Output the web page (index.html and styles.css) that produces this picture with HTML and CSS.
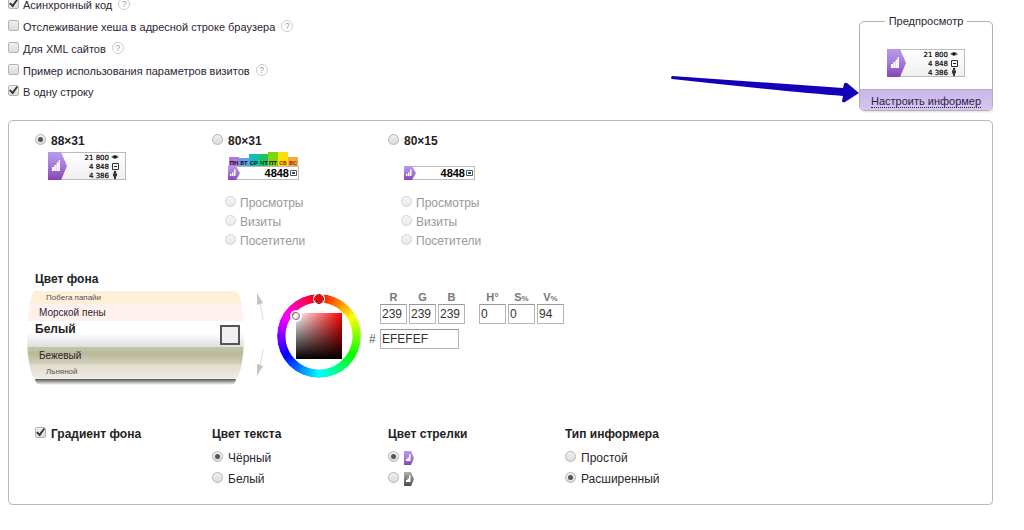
FILE: index.html
```html
<!DOCTYPE html>
<html lang="ru">
<head>
<meta charset="utf-8">
<title>Настройка информера</title>
<link rel="stylesheet" href="styles.css">
</head>
<body>
<svg class="defs" aria-hidden="true">
  <defs>
    <linearGradient id="violet" x1="0" y1="0" x2="0" y2="1"><stop offset="0" stop-color="#b99af0"/><stop offset=".5" stop-color="#a47ad8"/><stop offset="1" stop-color="#8744b4"/></linearGradient>
    <linearGradient id="gray" x1="0" y1="0" x2="0" y2="1"><stop offset="0" stop-color="#b4b4b4"/><stop offset="1" stop-color="#4a4a4a"/></linearGradient>
    <linearGradient id="paper" x1="0" y1="0" x2="0" y2="1"><stop offset="0" stop-color="#fff"/><stop offset="1" stop-color="#efefef"/></linearGradient>
    <symbol id="informer-large" viewBox="0 0 78 28">
      <rect x=".5" y=".5" width="77" height="27" fill="url(#paper)" stroke="#bbb"/>
      <path d="M0 0h13l6 14-6 14H0z" fill="url(#violet)"/>
      <path d="M4 15h2v4H4zM6.300 13h2v6h-2zM8.600 10.500h1.800V19H8.600zM10.600 8H12v11h-1.400z" fill="#fff"/>
      <g class="digits"><text x="61" y="8">21 800</text><text x="61" y="17">4 848</text><text x="61" y="26">4 386</text></g>
      <path d="M63 5q4-4 8 0q-4 3-8 0z" fill="#666"/><circle cx="67" cy="5" r="1.500" fill="#111"/>
      <path d="M64.500 11.500h6v6h-6z" fill="none" stroke="#333"/><path d="M66 14h3v1h-3z" fill="#222"/>
      <circle cx="67" cy="20" r="1.200" fill="#222"/><path d="M65 21.300h4v3h-1V27h-2v-2.500h-1z" fill="#333"/>
    </symbol>
    <symbol id="informer-line" viewBox="0 0 71 14">
      <rect x=".5" y=".5" width="70" height="13" fill="#fff" stroke="#bbb"/>
      <path d="M0 0h8l4 7-4 7H0z" fill="url(#violet)"/>
      <path d="M2 8h1.500v2H2zM4 6.500h1.500V10H4zM6 3.500h1.500V10H6z" fill="#fff"/>
      <text class="total" x="61" y="11">4848</text>
      <path d="M62.500 4.500h6v5h-6z" fill="none" stroke="#555"/><path d="M64 6h3v2h-3z" fill="#444"/>
    </symbol>
    <symbol id="tag" viewBox="0 0 10 14">
      <path d="M0 0h7l3 7-3 7H0z"/><path d="M2 8h1.500v2H2zM3.500 6.500H5V10H3.500zM5 3.500h1.500V10H5z" fill="#fff"/>
    </symbol>
  </defs>
</svg>

<header class="top">
  <ul class="options">
    <li><label><input type="checkbox" checked>Асинхронный код</label><button type="button" class="help" aria-label="Справка">?</button></li>
    <li><label><input type="checkbox">Отслеживание хеша в адресной строке браузера</label><button type="button" class="help" aria-label="Справка">?</button></li>
    <li><label><input type="checkbox">Для XML сайтов</label><button type="button" class="help" aria-label="Справка">?</button></li>
    <li><label><input type="checkbox">Пример использования параметров визитов</label><button type="button" class="help" aria-label="Справка">?</button></li>
    <li><label><input type="checkbox" checked>В одну строку</label></li>
  </ul>
  <div class="preview-wrap">
    <svg class="pointer" viewBox="0 0 188 28" aria-hidden="true"><path d="M1 0L172 12L173 8Q174 6 176 7L188 17L174 26Q171 27 171 25L172 20Q120 16 1 3Q-1 2 1 0z" fill="#1400b8"/></svg>
    <fieldset class="preview">
      <legend>Предпросмотр</legend>
      <svg class="large"><use href="#informer-large"/></svg>
      <div class="preview-foot"><a href="#settings">Настроить информер</a></div>
    </fieldset>
  </div>
</header>

<main class="panel" id="settings">
  <section class="columns">
    <div>
      <label class="size"><input type="radio" name="size" checked>88×31</label>
      <div class="sample"><svg class="large"><use href="#informer-large"/></svg></div>
    </div>
    <div>
      <label class="size"><input type="radio" name="size">80×31</label>
      <div class="sample indent">
        <svg class="week" viewBox="0 0 71 28">
          <path d="M1 5h10v9H1z" fill="#b279dd"/><path d="M11 6h10v8H11z" fill="#6c9fe8"/><path d="M21 2h10v12H21z" fill="#16bdb8"/><path d="M31 2h9v12h-9z" fill="#1bc45c"/><path d="M40 0h10v14H40z" fill="#83d30c"/><path d="M50 0h10v14H50z" fill="#f9df0c"/><path d="M60 5h10v9H60z" fill="#f4ad3c"/>
          <g class="days"><text x="6" y="13">ПН</text><text x="16" y="13">ВТ</text><text x="26" y="13">СР</text><text x="36" y="13">ЧТ</text><text x="45" y="13">ПТ</text><text x="55" y="13" class="off">СБ</text><text x="65" y="13" class="off">ВС</text></g>
          <use href="#informer-line" y="14" width="71" height="14"/>
        </svg>
      </div>
      <div class="metrics">
        <label><input type="radio" name="m31" disabled>Просмотры</label>
        <label><input type="radio" name="m31" disabled>Визиты</label>
        <label><input type="radio" name="m31" disabled>Посетители</label>
      </div>
    </div>
    <div>
      <label class="size"><input type="radio" name="size">80×15</label>
      <div class="sample indent"><svg class="line"><use href="#informer-line"/></svg></div>
      <div class="metrics">
        <label><input type="radio" name="m15" disabled>Просмотры</label>
        <label><input type="radio" name="m15" disabled>Визиты</label>
        <label><input type="radio" name="m15" disabled>Посетители</label>
      </div>
    </div>
  </section>

  <section class="background">
    <h2>Цвет фона</h2>
    <div class="picker">
      <div class="drum-wrap">
        <div class="drum">
          <button type="button" class="far papaya">Побега папайи</button>
          <button type="button" class="near foam">Морской пены</button>
          <button type="button" class="current"><span>Белый</span><i class="swatch"></i></button>
          <button type="button" class="near beige">Бежевый</button>
          <button type="button" class="far linen">Льняной</button>
        </div>
        <div class="drum-shadow"></div>
      </div>
      <div class="arrows">
        <button type="button" aria-label="Предыдущий"><svg viewBox="0 0 7 28"><path d="M0 0L6 10L0 12z" fill="#c4c4c4"/><path d="M3 11Q5 18 6 27" stroke="#ddd" fill="none"/></svg></button>
        <button type="button" aria-label="Следующий"><svg viewBox="0 0 7 28"><path d="M0 28L6 18L0 16z" fill="#c4c4c4"/><path d="M3 17Q5 10 6 1" stroke="#ddd" fill="none"/></svg></button>
      </div>
      <div class="wheel">
        <div class="ring"></div>
        <div class="shade"></div>
        <i class="dot hue"></i>
        <i class="dot tone"></i>
      </div>
      <div class="fields">
        <div class="channels">
          <label><span>R</span><input type="text" value="239"></label>
          <label><span>G</span><input type="text" value="239"></label>
          <label><span>B</span><input type="text" value="239"></label>
          <label class="first"><span>H°</span><input type="text" value="0"></label>
          <label><span>S<small>%</small></span><input type="text" value="0"></label>
          <label><span>V<small>%</small></span><input type="text" value="94"></label>
        </div>
        <label class="hex"><span>#</span><input type="text" value="EFEFEF"></label>
      </div>
    </div>
  </section>

  <section class="columns choices">
    <div><label class="size"><input type="checkbox" checked>Градиент фона</label></div>
    <div>
      <h2>Цвет текста</h2>
      <label><input type="radio" name="text" checked>Чёрный</label>
      <label><input type="radio" name="text">Белый</label>
    </div>
    <div>
      <h2>Цвет стрелки</h2>
      <label><input type="radio" name="arrow" checked aria-label="Фиолетовая"><svg class="tag" fill="url(#violet)"><use href="#tag"/></svg></label>
      <label><input type="radio" name="arrow" aria-label="Серая"><svg class="tag" fill="url(#gray)"><use href="#tag"/></svg></label>
    </div>
    <div>
      <h2>Тип информера</h2>
      <label><input type="radio" name="kind">Простой</label>
      <label><input type="radio" name="kind" checked>Расширенный</label>
    </div>
  </section>
</main>
</body>
</html>
```

FILE: styles.css
```css
* { box-sizing: border-box; }
body {
  margin: 0 31px 0 8px;
  background: #fff;
  color: #2d2433;
  font: 12px/16px "Liberation Sans", Arial, sans-serif;
}
svg { display: block; }
.defs { position: absolute; width: 0; height: 0; }
h2 { margin: 0; font-size: 12px; line-height: 16px; color: #222; }
button { border: 0; padding: 0; margin: 0; background: none; font-family: inherit; color: inherit; }

/* checkboxes and radios */
input[type="checkbox"], input[type="radio"] {
  appearance: none;
  flex: none;
  display: grid;
  place-items: center;
  width: 11px;
  height: 11px;
  margin: 0 4px 3px 0;
  border: 1px solid #b4b4b4;
  border-radius: 2px;
  background: linear-gradient(#f0f0f0, #dcdcdc);
}
input[type="radio"] { border-radius: 50%; }
input[type="checkbox"]:checked::after {
  content: "";
  width: 9px;
  height: 9px;
  background: #333;
  clip-path: polygon(0 50%, 18% 38%, 38% 60%, 85% 0, 100% 12%, 42% 95%);
}
input[type="radio"]:checked::after {
  content: "";
  width: 5px;
  height: 5px;
  border-radius: 50%;
  background: #555;
}
input:disabled { opacity: .6; }

/* top area */
.top { display: flex; justify-content: space-between; align-items: flex-start; }
.options { list-style: none; margin: -6px 0 0; padding: 0; font-size: 11px; }
.options li { display: flex; align-items: center; gap: 6px; height: 22px; }
.options li:last-child { height: 20px; }
.options label { display: flex; align-items: center; }
.help {
  width: 12px;
  height: 12px;
  margin-bottom: 3px;
  border: 1px solid #ccc;
  border-radius: 50%;
  color: #999;
  font-size: 9px;
  line-height: 10px;
  text-align: center;
}
.preview-wrap { position: relative; margin-top: 13px; }
.pointer { position: absolute; right: 100%; top: 63px; width: 188px; height: 28px; }
.preview {
  width: 134px;
  margin: 0;
  padding: 0;
  border: 1px solid #b0b0b0;
  border-radius: 5px;
  box-shadow: 1px 1px 2px #ddd;
  font-size: 11px;
}
.preview legend { margin: 0 auto; padding: 0 4px; }
.preview .large { margin: 20px auto 12px; }
.preview-foot {
  height: 21px;
  border-top: 1px solid #b9acca;
  border-radius: 0 0 4px 4px;
  background: linear-gradient(#c9b6e6, #d6c6f0);
  text-align: center;
  padding-top: 3px;
}
.preview-foot a { color: #2d2050; text-decoration: none; border-bottom: 1px dotted #2d2050; }

/* informer samples */
.large { width: 78px; height: 28px; }
.week { width: 71px; height: 28px; }
.line { width: 71px; height: 14px; }
.digits { font: 7px "DejaVu Sans", sans-serif; text-anchor: end; fill: #000; stroke: #000; stroke-width: .2px; }
.total { font: bold 11px "Liberation Sans", sans-serif; text-anchor: end; fill: #000; }
.days { font: bold 6px Roboto, sans-serif; text-anchor: middle; fill: #112; }
.days .off { fill: #b02000; }

/* panel */
.panel {
  margin-top: 9px;
  padding: 12px 26px 15px;
  border: 1px solid #b8b8b8;
  border-radius: 5px;
  box-shadow: 1px 2px 3px #e4e4e4;
}
.columns { display: grid; grid-template-columns: 177px 176px 177px 1fr; }
.columns label { display: flex; align-items: center; }
.columns .size { height: 16px; font-weight: bold; color: #222; }
.size input { margin-right: 5px; }
.sample { display: flex; align-items: flex-end; height: 28px; margin: 3px 0 13px 13px; }
.sample.indent { margin-left: 16px; }
.metrics { margin-left: 13px; color: #999; }
.metrics label { height: 19px; }

/* background colour */
.background { margin-top: 21px; }
.picker { display: flex; align-items: flex-start; margin-top: 4px; }
.drum-wrap { width: 217px; margin-left: -8px; }
.drum {
  display: flex;
  flex-direction: column;
  overflow: hidden;
  border-radius: 9px / 44px;
}
.drum-shadow { height: 6px; margin: 0 8px; border-radius: 0 0 6px 6px; background: linear-gradient(#555, #aaa 50%, #fff); }
.drum button { display: block; text-align: left; }
.drum .far { height: 13px; padding-left: 19px; font-size: 8px; line-height: 10px; color: #555; }
.drum .near { height: 17px; padding-left: 12px; font-size: 10px; line-height: 12px; }
.drum .papaya { background: #ffeed8; }
.drum .foam { background: #fff2ee; }
.drum .current {
  display: flex;
  justify-content: space-between;
  height: 26px;
  padding: 0 4px 0 8px;
  background: linear-gradient(#fff 45%, #dedede);
  font-size: 12px;
  line-height: 16px;
  font-weight: bold;
  color: #222;
}
.swatch { width: 20px; height: 20px; margin-top: 4px; border: 2px solid #555; background: #efefef; }
.drum .beige { background: linear-gradient(#c4c4a8, #b9b99a 40%, #d3d1bb); }
.drum .linen { height: 15px; line-height: 12px; background: linear-gradient(#dedacb, #f3ece4); }
.arrows { display: flex; flex-direction: column; gap: 27px; margin: 2px 13px 0; }
.arrows svg { width: 7px; height: 28px; }
.wheel { position: relative; display: grid; place-items: center; width: 84px; height: 84px; margin-top: 3px; }
.ring {
  grid-area: 1 / 1;
  width: 84px;
  height: 84px;
  border-radius: 50%;
  background: conic-gradient(#f00, #ff0, #0f0, #0ff, #00f, #f0f, #f00);
  mask: radial-gradient(circle, transparent 33px, #000 34px);
}
.shade {
  grid-area: 1 / 1;
  width: 46px;
  height: 46px;
  background: linear-gradient(transparent, #000), linear-gradient(to right, #fff, #f00);
}
.dot { position: absolute; border: 2px solid #fff; border-radius: 50%; width: 12px; height: 12px; }
.hue { left: 36px; top: -1px; background: #f00; outline: 1px solid #333; outline-offset: -2px; }
.tone { left: 13px; top: 16px; outline: 1px solid #777; outline-offset: -3px; }
.fields { display: grid; gap: 5px; margin-left: 8px; color: #555; }
.channels { display: flex; gap: 2px; margin-left: 11px; }
.channels label { display: flex; flex-direction: column; align-items: center; font-size: 11px; line-height: 13px; font-weight: bold; color: #777; }
.channels span { height: 13px; }
.channels .first { margin-left: 12px; }
.channels small { font-size: 8px; }
.fields input {
  width: 27px;
  height: 20px;
  padding: 0 1px;
  border: 1px solid #b5b5b5;
  border-top-color: #999;
  background: #fff;
  color: #333;
  font: 12px "Liberation Sans", Arial, sans-serif;
}
.hex { display: flex; align-items: center; }
.hex span { width: 11px; }
.hex input { width: 79px; }

/* bottom choices */
.choices { margin-top: 41px; }
.choices h2 { margin-bottom: 5px; }
.choices label { height: 21px; }
.choices input { margin-right: 5px; }
.tag { width: 10px; height: 14px; }
```
